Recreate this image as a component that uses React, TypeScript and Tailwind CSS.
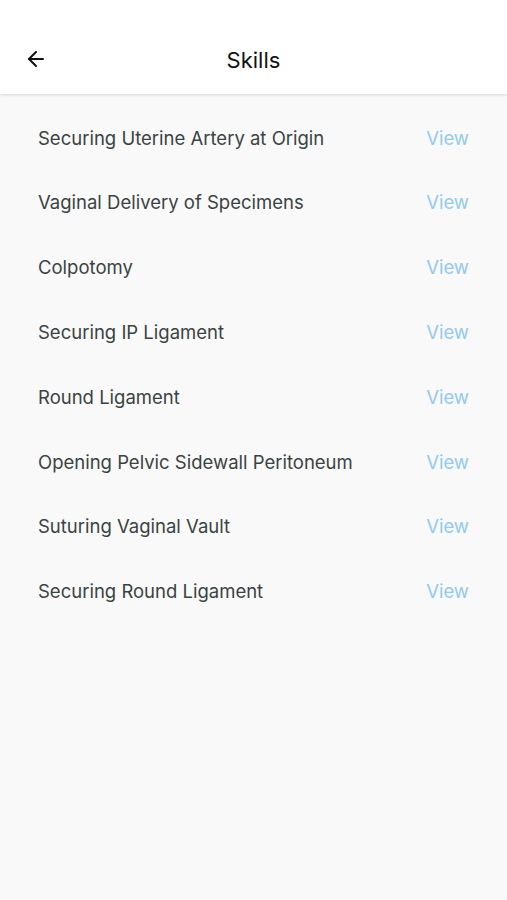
import {ArrowLeft} from 'lucide-react';

const skills = [
    'Securing Uterine Artery at Origin',
    'Vaginal Delivery of Specimens',
    'Colpotomy',
    'Securing IP Ligament',
    'Round Ligament',
    'Opening Pelvic Sidewall Peritoneum',
    'Suturing Vaginal Vault',
    'Securing Round Ligament',
];

export default function App() {
    return (
        <div className="min-h-[900px] bg-[#f9f9f9] font-['Inter',sans-serif]">
            <header className="relative h-[94px] bg-white shadow-[0_1px_3px_rgba(0,0,0,0.15)] flex items-end pb-[20px]">
                <button className="absolute left-[24px] bottom-[23px] text-[#111]">
                    <ArrowLeft className="h-[24px] w-[24px]" strokeWidth={2}/>
                </button>
                <h1 className="w-full text-center text-[22px] text-[#111] leading-[27px]">Skills</h1>
            </header>

            <ul className="pt-[12px]">
                {skills.map((skill) => (
                    <li key={skill} className="h-[64.8px] flex items-center justify-between px-[38px]">
                        <span className="text-[18.5px] text-[#3a4343]">{skill}</span>
                        <span className="text-[18.5px] text-[#93c9f0]">View</span>
                    </li>
                ))}
            </ul>
        </div>
    );
}
